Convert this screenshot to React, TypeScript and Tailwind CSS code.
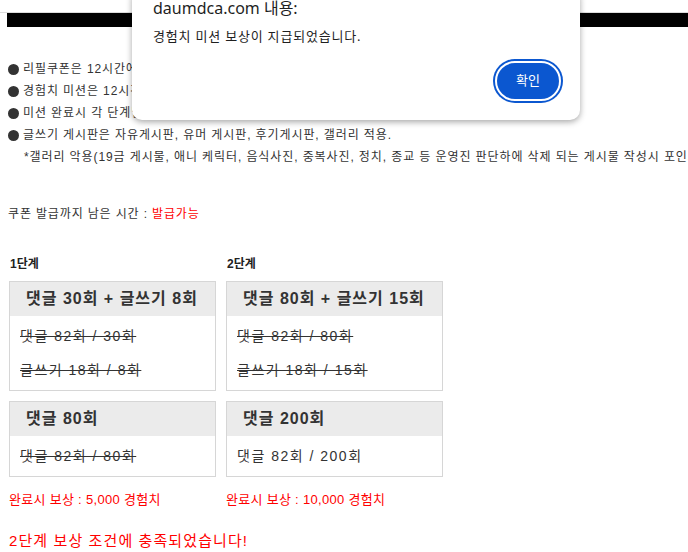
import React from "react";

const steps = [
  {
    label: "1단계",
    width: "w-[207px]",
    reward: "완료시 보상 : 5,000 경험치",
    boxes: [
      {
        title: "댓글 30회 + 글쓰기 8회",
        lines: [
          { text: "댓글 82회 / 30회", done: true },
          { text: "글쓰기 18회 / 8회", done: true },
        ],
      },
      { title: "댓글 80회", lines: [{ text: "댓글 82회 / 80회", done: true }] },
    ],
  },
  {
    label: "2단계",
    width: "w-[217px]",
    reward: "완료시 보상 : 10,000 경험치",
    boxes: [
      {
        title: "댓글 80회 + 글쓰기 15회",
        lines: [
          { text: "댓글 82회 / 80회", done: true },
          { text: "글쓰기 18회 / 15회", done: true },
        ],
      },
      { title: "댓글 200회", lines: [{ text: "댓글 82회 / 200회", done: false }] },
    ],
  },
];

const notices = [
  "리필쿠폰은 12시간에 한번씩 발급 받을 수 있습니다.",
  "경험치 미션은 12시간 마다 초기화 됩니다.",
  "미션 완료시 각 단계별 경험치가 지급됩니다.",
  "글쓰기 게시판은 자유게시판, 유머 게시판, 후기게시판, 갤러리 적용.",
];

export default function App() {
  return (
    <div className="relative w-[688px] h-[552px] overflow-hidden bg-white text-[#333] font-['Liberation_Sans','Noto_Sans_CJK_KR',sans-serif]">
      {/* 상단 바 */}
      <div className="mt-[12px] border-t border-[#dcdcdc]">
        <div className="ml-[7px] h-[14px] bg-black" />
      </div>

      {/* 안내 문구 */}
      <div className="pl-[8px] mt-[31px] text-[12px] leading-[22px] tracking-[0.9px] whitespace-nowrap">
        {notices.map((n) => (
          <div key={n} className="flex items-center">
            <span className="w-[11px] h-[11px] rounded-full bg-[#333] mr-[4px] shrink-0" />
            <span>{n}</span>
          </div>
        ))}
        <div className="pl-[16px]">
          *갤러리 악용(19금 게시물, 애니 케릭터, 음식사진, 중복사진, 정치, 종교 등 운영진 판단하에 삭제 되는 게시물 작성시 포인트 회수 및 이용 제한)
        </div>
      </div>

      <div className="pl-[8px] mt-[35px] text-[12px] leading-[22px] tracking-[0.85px]">
        쿠폰 발급까지 남은 시간 : <span className="text-[#ff0000]">발급가능</span>
      </div>

      {/* 미션 단계 */}
      <div className="flex gap-[10px] pl-[9px] mt-[28px]">
        {steps.map((s) => (
          <div key={s.label} className={`${s.width} flex flex-col`}>
            <div className="pl-[1px] text-[12px] leading-[22px] font-bold text-[#222]">{s.label}</div>
            <div className="mt-[6px] flex flex-col gap-[10px]">
              {s.boxes.map((b) => (
                <div key={b.title} className="border border-[#d6d6d6]">
                  <div className="h-[34px] bg-[#ebebeb] pl-[16px] flex items-center text-[16px] tracking-[1px] font-bold text-[#333] whitespace-nowrap">
                    {b.title}
                  </div>
                  <div className="px-[10px] py-[9px] flex flex-col gap-[12px] text-[14px] leading-[22px] tracking-[1.5px]">
                    {b.lines.map((l) => (
                      <div key={l.text} className={l.done ? "line-through decoration-[#333]" : ""}>
                        {l.text}
                      </div>
                    ))}
                  </div>
                </div>
              ))}
            </div>
            <div className="mt-[12px] text-[13px] leading-[22px] tracking-[0.3px] text-[#ff0000] whitespace-nowrap">
              {s.reward}
            </div>
          </div>
        ))}
      </div>

      <div className="pl-[9px] mt-[19px] text-[15px] leading-[22px] tracking-[1.1px] text-[#ff0000]">
        2단계 보상 조건에 충족되었습니다!
      </div>

      {/* 알림 대화상자 */}
      <div className="absolute left-[132px] top-[-12px] w-[448px] h-[132px] rounded-[10px] bg-white shadow-[0_2px_6px_rgba(0,0,0,0.35)] font-['Noto_Sans','Noto_Sans_CJK_KR',sans-serif]">
        <div className="pl-[21px] pt-[10px] text-[16px] leading-[20px] text-[#1f1f1f]">daumdca.com 내용:</div>
        <div className="pl-[21px] mt-[9px] text-[13px] leading-[18px] tracking-[0.8px] text-[#1f1f1f]">
          경험치 미션 보상이 지급되었습니다.
        </div>
        <div className="absolute right-[17px] bottom-[17px] rounded-full bg-[#0b57d0] p-[2px]">
          <div className="w-[66px] h-[40px] rounded-full border-2 border-white bg-[#0b57d0] flex items-center justify-center text-[13px] text-white">
            확인
          </div>
        </div>
      </div>
    </div>
  );
}
